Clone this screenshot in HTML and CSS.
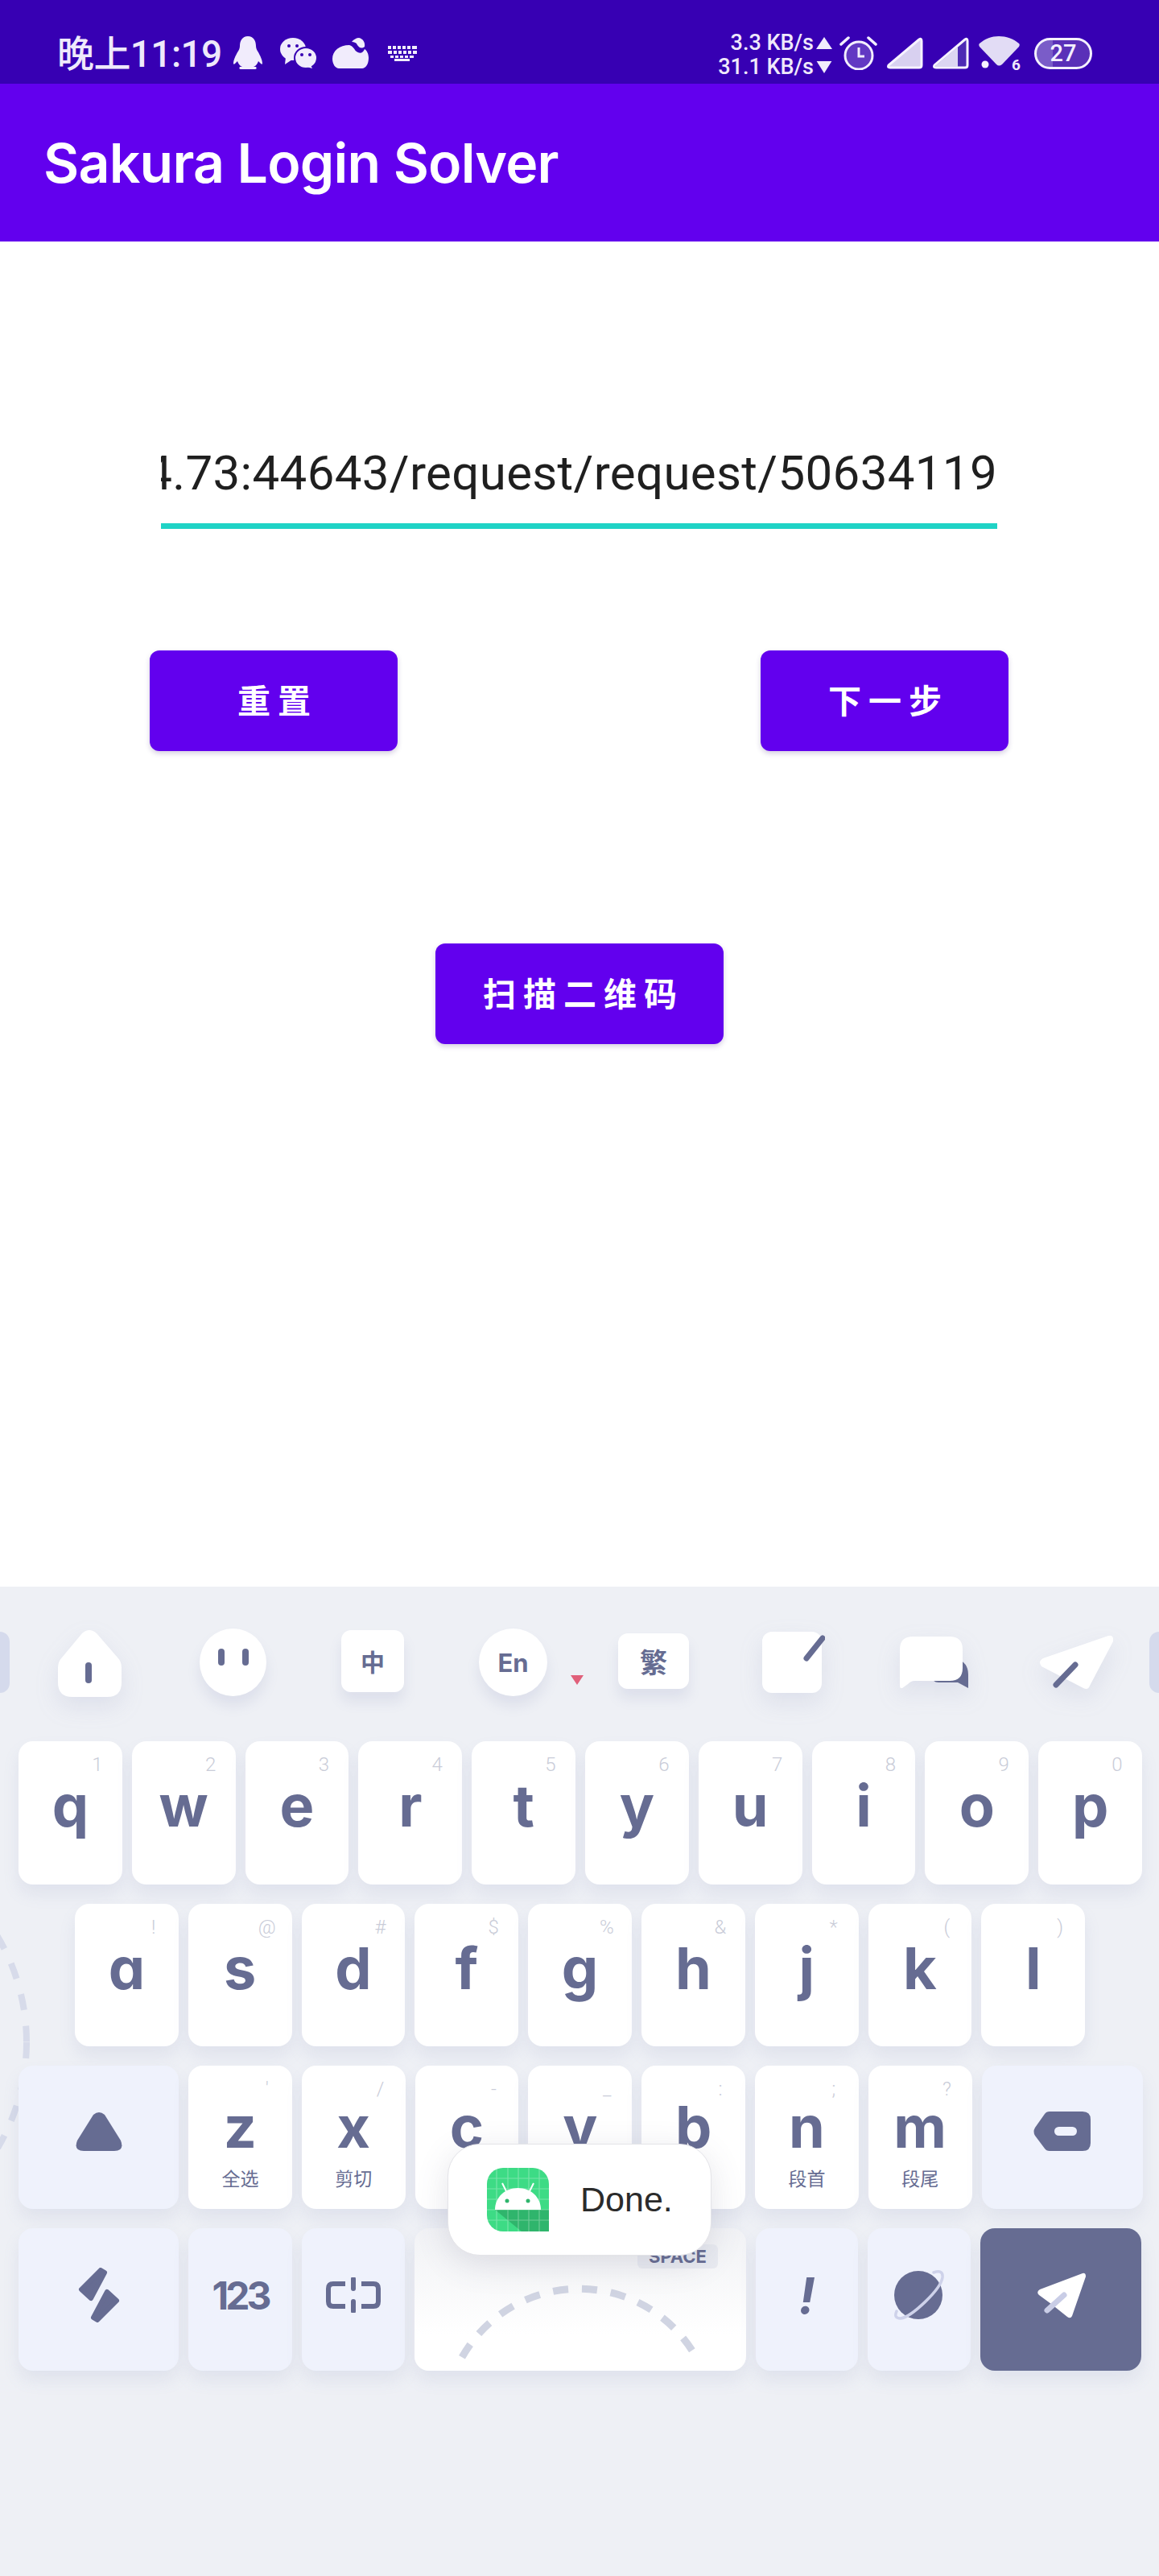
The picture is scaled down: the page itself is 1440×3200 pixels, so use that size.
FILE: index.html
```html
<!DOCTYPE html>
<html>
<head>
    <title>Sakura Login Solver</title>
    <link rel="stylesheet" href="styles.css">
</head>
<body>
    <div class="phone">
        <div class="status">
            <div class="status-left">
                <span class="clock">晚上11:19</span>
                <svg class="ic-qq" viewBox="0 0 36 41"><path d="M18 0c-7 0-10 6-10 12 0 3-1 5-3 8-2 4-5 9-5 14 0 1 1 1 2 0l3-3c1 3 3 6 6 7H8c-1 1-1 3 1 3h18c2 0 2-2 1-3h-3c3-1 5-4 6-7l3 3c1 1 2 1 2 0 0-5-3-10-5-14-2-3-3-5-3-8 0-6-3-12-10-12z"/></svg>
                <svg class="ic-wechat" viewBox="0 0 46 38"><ellipse cx="16" cy="14" rx="16" ry="14"/><path d="M7 24l-1 9 9-6z"/><ellipse cx="32" cy="25" rx="14" ry="13" stroke="#3700b3" stroke-width="2"/><path d="M38 34l2 4-7-2z"/><circle class="hole" cx="11" cy="10" r="2"/><circle class="hole" cx="21" cy="10" r="2"/><circle class="hole" cx="27" cy="21" r="2"/><circle class="hole" cx="37" cy="21" r="2"/></svg>
                <svg class="ic-cloud" viewBox="0 0 45 38"><path d="M21 9C9 9 0 16 0 26c0 7 4 12 8 12h29c4 0 8-5 8-13 0-5-2-9-5-11-2 5-6 6-10 3-3-2-3-6-9-8z"/><path d="M24 5c2-3 6-5 9-5 5 1 8 6 7 11-4 3-7 1-9-2-1-3-4-4-7-4z"/></svg>
                <svg class="ic-keys" viewBox="0 0 36 19"><path d="M0 0h4v4H0zM6 0h4v4H6zM12 0h4v4h-4zM18 0h4v4h-4zM24 0h4v4h-4zM30 0h6v4h-6zM0 6h5v4H0zM7 6h4v4H7zM13 6h4v4h-4zM19 6h4v4h-4zM25 6h4v4h-4zM31 6h5v4h-5zM3 12h4v3H3zM9 12h4v3H9zM15 12h4v3h-4zM21 12h4v3h-4zM27 12h5v3h-5zM8 16h19v3H8z"/></svg>
            </div>
            <div class="status-right">
                <div class="speed">
                    <div class="speed-line">3.3 KB/s<svg viewBox="0 0 20 15"><path d="M10 0l10 15H0z"/></svg></div>
                    <div class="speed-line">31.1 KB/s<svg viewBox="0 0 20 16"><path d="M0 0h20L10 16z"/></svg></div>
                </div>
                <svg class="ic-alarm" viewBox="0 0 47 42"><circle cx="24" cy="24" r="17" fill="#ffffff" fill-opacity=".22" stroke="#f3eeff" stroke-width="3"/><path d="M24 14v11h7" fill="none" stroke="#f3eeff" stroke-width="3"/><path d="M2 10l9-8M45 10l-9-8" fill="none" stroke="#f3eeff" stroke-width="3.5" stroke-linecap="round"/></svg>
                <svg class="ic-signal" viewBox="0 0 46 40"><path d="M41 3L3 35q-2 3 2 3h36q3 0 3-3V5q0-4-3-2z" fill="#d8d0f0" stroke="#f6f2ff" stroke-width="3"/></svg>
                <svg class="ic-signal" viewBox="0 0 46 40"><path d="M41 3L3 35q-2 3 2 3h36q3 0 3-3V5q0-4-3-2z" fill="#4d2ab4" stroke="#f6f2ff" stroke-width="3"/><path d="M32 12L4 36q-1 1 1 1h27z" fill="#dcd6f2"/></svg>
                <div class="wifi-box">
                    <svg class="ic-wifi" viewBox="0 0 51 43"><path d="M25 0c9 0 18 3 25 9 1 1 1 2 0 4L29 35q-4 3-7 0L1 13c-1-2-1-3 0-4C8 3 16 0 25 0z" fill="#e2dcf5"/><circle cx="8" cy="35" r="4.5" fill="#f6f2ff"/></svg>
                    <span class="wifi-num">6</span>
                </div>
                <div class="battery">27</div>
            </div>
        </div>

        <div class="appbar">Sakura Login Solver</div>

        <div class="content">
            <div class="field"><span class="field-text">4.73:44643/request/request/50634119</span></div>
            <div class="btn-row">
                <button class="btn">重置</button>
                <button class="btn">下一步</button>
            </div>
            <button class="btn btn-scan">扫描二维码</button>
        </div>

        <div class="keyboard">
            <svg class="deco-arc" viewBox="0 0 40 270"><circle cx="-225" cy="137" r="258" fill="none" stroke="#d7dbea" stroke-width="8" stroke-dasharray="20 20"/></svg>

            <div class="toolbar">
                <div class="blob blob-l"></div>
                <svg class="tb-house" viewBox="0 0 79 83"><path d="M30 4q9-8 18 0l26 30q5 5 5 13v18q0 18-18 18H18Q0 83 0 65V47q0-8 5-13z" fill="#fff"/><rect x="34" y="40" width="8" height="26" rx="4" fill="#666c92"/></svg>
                <div class="tb-round tb-face"><i></i><i></i></div>
                <div class="tb-square tb-zh">中</div>
                <div class="tb-round tb-en">En</div>
                <div class="tb-tri"></div>
                <div class="tb-square tb-fan">繁</div>
                <svg class="tb-note" viewBox="0 0 78 76"><rect width="74" height="76" rx="12" fill="#fff"/><path d="M55 33L75 8" stroke="#666c92" stroke-width="7" stroke-linecap="round" fill="none"/></svg>
                <svg class="tb-chat" viewBox="0 0 85 64"><path d="M40 48h30V27q15 5 15 20v17l-13-7H48q-8 0-8-9z" fill="#666c92"/><path d="M16 0h46q16 0 16 16v23q0 16-16 16H18q-4 0-8 4l-7 5q-3 1-3-3V16Q0 0 16 0z" fill="#fff"/></svg>
                <svg class="tb-plane" viewBox="0 0 92 68"><path d="M86 1L5 29q-7 4-2 10l52 27q6 3 8-3L92 8q1-9-6-7z" fill="#fff"/><path d="M21 62l24-25" stroke="#666c92" stroke-width="7" stroke-linecap="round"/></svg>
                <div class="blob blob-r"></div>
            </div>

            <div class="rows">
                <div class="row row-ten">
                    <div class="key"><span class="hint">1</span><span class="letter">q</span></div>
                    <div class="key"><span class="hint">2</span><span class="letter">w</span></div>
                    <div class="key"><span class="hint">3</span><span class="letter">e</span></div>
                    <div class="key"><span class="hint">4</span><span class="letter">r</span></div>
                    <div class="key"><span class="hint">5</span><span class="letter">t</span></div>
                    <div class="key"><span class="hint">6</span><span class="letter">y</span></div>
                    <div class="key"><span class="hint">7</span><span class="letter">u</span></div>
                    <div class="key"><span class="hint">8</span><span class="letter">i</span></div>
                    <div class="key"><span class="hint">9</span><span class="letter">o</span></div>
                    <div class="key"><span class="hint">0</span><span class="letter">p</span></div>
                </div>
                <div class="row row-ten row-home">
                    <div class="key"><span class="hint">!</span><span class="letter">a</span></div>
                    <div class="key"><span class="hint">@</span><span class="letter">s</span></div>
                    <div class="key"><span class="hint">#</span><span class="letter">d</span></div>
                    <div class="key"><span class="hint">$</span><span class="letter">f</span></div>
                    <div class="key"><span class="hint">%</span><span class="letter">g</span></div>
                    <div class="key"><span class="hint">&amp;</span><span class="letter">h</span></div>
                    <div class="key"><span class="hint">*</span><span class="letter">j</span></div>
                    <div class="key"><span class="hint">(</span><span class="letter">k</span></div>
                    <div class="key"><span class="hint">)</span><span class="letter">l</span></div>
                </div>
                <div class="row row-third">
                    <div class="key key-fn key-shift">
                        <svg class="ic-shift" viewBox="0 0 58 48"><path d="M22 3q7-6 14 0l20 32q5 13-8 13H10Q-3 48 2 35z" fill="#666c92"/></svg>
                    </div>
                    <div class="key key-low"><span class="hint">'</span><span class="letter">z</span><span class="sub">全选</span></div>
                    <div class="key key-low"><span class="hint">/</span><span class="letter">x</span><span class="sub">剪切</span></div>
                    <div class="key key-low"><span class="hint">-</span><span class="letter">c</span></div>
                    <div class="key key-low"><span class="hint">_</span><span class="letter">v</span></div>
                    <div class="key key-low"><span class="hint">:</span><span class="letter">b</span></div>
                    <div class="key key-low"><span class="hint">;</span><span class="letter">n</span><span class="sub">段首</span></div>
                    <div class="key key-low"><span class="hint">?</span><span class="letter">m</span><span class="sub">段尾</span></div>
                    <div class="key key-fn key-shift">
                        <svg class="ic-del" viewBox="0 0 71 49"><path d="M20 0h41q10 0 10 10v29q0 10-10 10H20q-4 0-6-3L2 30q-3-5 0-10L14 3q2-3 6-3z" fill="#666c92"/><rect x="26" y="19" width="28" height="11" rx="5.5" fill="#eff2fc"/></svg>
                    </div>
                </div>
                <div class="row row-last">
                    <div class="key key-fn">
                        <svg class="ic-sym" viewBox="0 0 52 68"><path d="M4 27L28 3l5 3-17 32z" fill="#666c92" stroke="#666c92" stroke-width="6" stroke-linejoin="round"/><path d="M48 41L24 65l-5-3 17-32z" fill="#666c92" stroke="#666c92" stroke-width="6" stroke-linejoin="round"/></svg>
                    </div>
                    <div class="key key-fn"><span class="num-label">123</span></div>
                    <div class="key key-fn">
                        <svg class="ic-link" viewBox="0 0 68 44"><path d="M24 8H9Q3 8 3 14v16q0 6 6 6h15M44 8h15q6 0 6 6v16q0 6-6 6H44" fill="none" stroke="#666c92" stroke-width="6"/><path d="M34 2v12M34 30v12" stroke="#666c92" stroke-width="6" stroke-linecap="round"/></svg>
                    </div>
                    <div class="key key-space">
                        <span class="space-tag">SPACE</span>
                        <svg class="space-arc" viewBox="0 0 412 177"><path d="M59 160A167 167 0 0 1 350 160" fill="none" stroke="#d0d4e2" stroke-width="9" stroke-dasharray="19 17"/></svg>
                    </div>
                    <div class="key key-fn"><span class="bang">!</span></div>
                    <div class="key key-fn">
                        <svg class="ic-planet" viewBox="0 0 62 62"><ellipse cx="30" cy="31" rx="30" ry="30" fill="#666c92"/><path d="M49 3q12-4 11 6C58 24 22 58 8 60q-9 0-5-9" fill="none" stroke="#ced2ea" stroke-width="3.5" stroke-linecap="round"/></svg>
                    </div>
                    <div class="key key-send">
                        <svg class="ic-send" viewBox="0 0 61 57"><path d="M57 1L4 21q-5 3-1 7l15 11 20 16q4 3 6-1L61 5q0-5-4-4z" fill="#fff"/><path d="M13 47l21-19" stroke="#c9cde6" stroke-width="7" stroke-linecap="round"/></svg>
                    </div>
                </div>
            </div>
        </div>

        <div class="toast">
            <svg class="toast-icon" viewBox="0 0 77 79">
                <rect width="77" height="79" rx="20" fill="#3ddb85"/>
                <path d="M52 52h25v27H43L10 52z" fill="#2fb56c"/>
                <path d="M0 13h77M0 26h77M0 39h77M0 52h77M0 65h77M12 0v79M26 0v79M39 0v79M52 0v79M65 0v79" stroke="#fff" stroke-opacity=".3" stroke-width="1.2"/>
                <path d="M10 52c0-16 13-27 28.500-27S67 36 67 52z" fill="#fff"/>
                <path d="M24 29l-5-10M53 29l5-10" stroke="#fff" stroke-width="2"/>
                <circle cx="25" cy="41" r="2.500" fill="#2fb56c"/>
                <circle cx="51" cy="41" r="2.500" fill="#2fb56c"/>
            </svg>
            <span class="toast-text">Done.</span>
        </div>
    </div>
</body>
</html>
```

FILE: styles.css
```css
* {
    box-sizing: border-box;
}

body {
    margin: 0;
    background-color: #fff;
    font-family: "Roboto", "Noto Sans CJK SC", sans-serif;
}

.phone {
    position: relative;
    width: 1440px;
    height: 3200px;
    overflow: hidden;
}

/* status bar */
.status {
    display: flex;
    justify-content: space-between;
    height: 104px;
    padding: 0 83px 0 71px;
    background-color: #3700b3;
    color: #efe9fb;
}

.status svg {
    fill: #f1ecfc;
    flex: none;
}

.status-left {
    display: flex;
    align-items: center;
}

.clock {
    font-size: 46px;
    font-weight: 500;
    line-height: 60px;
    margin-top: 29px;
    margin-right: 14px;
    letter-spacing: -0.6px;
}

.ic-qq {
    width: 36px;
    height: 41px;
    margin-top: 27px;
}

.ic-wechat {
    width: 46px;
    height: 38px;
    margin: 28px 0 0 22px;
}

.hole {
    fill: #3700b3;
}

.ic-cloud {
    width: 45px;
    height: 38px;
    margin: 28px 0 0 19px;
}

.ic-keys {
    width: 36px;
    height: 19px;
    margin: 29px 0 0 24px;
}

.status-right {
    display: flex;
    align-items: center;
    padding-top: 28px;
}

.speed {
    font-size: 27px;
    font-weight: 500;
    line-height: 30px;
    text-align: right;
    margin-top: 4px;
}

.speed-line {
    display: flex;
    align-items: center;
    justify-content: flex-end;
}

.speed-line svg {
    width: 20px;
    height: 15px;
    margin-left: 3px;
}

.ic-alarm {
    width: 47px;
    height: 42px;
    margin-left: 9px;
}

.ic-signal {
    width: 46px;
    height: 40px;
    margin-left: 11px;
}

.wifi-box {
    position: relative;
    width: 51px;
    height: 43px;
    margin-left: 12px;
}

.ic-wifi {
    width: 51px;
    height: 43px;
}

.wifi-num {
    position: absolute;
    right: -1px;
    bottom: -3px;
    font-size: 19px;
    font-weight: 700;
    line-height: 20px;
}

.battery {
    width: 72px;
    height: 39px;
    margin-left: 18px;
    border: 3px solid #f4f0ff;
    border-radius: 20px;
    background: linear-gradient(90deg, #7a5cc8 0 30%, #5a30b8 30%);
    color: #f4f0ff;
    font-size: 29px;
    font-weight: 500;
    line-height: 32px;
    text-align: center;
}

/* app bar */
.appbar {
    height: 196px;
    padding: 0 0 0 54px;
    background-color: #6200ee;
    color: #fff;
    font-family: "Inter", sans-serif;
    font-size: 68px;
    font-weight: 600;
    line-height: 196px;
    letter-spacing: -0.8px;
}

/* form */
.content {
    height: 1671px;
    padding-top: 253px;
    background-color: #fff;
}

.field {
    display: flex;
    justify-content: flex-end;
    width: 1039px;
    height: 104px;
    margin: 0 0 0 200px;
    padding: 0 0 27px 0;
    overflow: hidden;
    border-bottom: 7px solid #1fd3c6;
    color: #1f1f1f;
    font-size: 60px;
    line-height: 70px;
    white-space: nowrap;
    letter-spacing: 0.35px;
}

.field-text {
    flex: none;
}

.btn-row {
    display: flex;
    justify-content: space-between;
    margin: 151px 187px 0 186px;
}

.btn {
    display: block;
    width: 308px;
    height: 125px;
    padding: 0 0 6px 10px;
    border: none;
    border-radius: 12px;
    background-color: #6200ee;
    box-shadow: 0 3px 6px rgba(60, 30, 120, 0.22);
    color: #fff;
    font-family: "Noto Sans CJK SC", sans-serif;
    font-size: 41px;
    font-weight: 700;
    letter-spacing: 9px;
}

.btn-scan {
    width: 358px;
    margin: 239px 0 0 541px;
}

/* keyboard */
.keyboard {
    position: relative;
    height: 1229px;
    background-color: #eef0f5;
}

.deco-arc {
    position: absolute;
    left: 0;
    top: 429px;
    width: 40px;
    height: 270px;
}

.toolbar {
    display: flex;
    align-items: center;
    height: 188px;
    margin-bottom: 4px;
}

.toolbar svg {
    flex: none;
    filter: drop-shadow(0 12px 14px rgba(120, 130, 180, 0.14));
}

.blob {
    flex: none;
    width: 12px;
    height: 76px;
    background-color: #d5daec;
}

.blob-l {
    border-radius: 0 12px 12px 0;
}

.blob-r {
    margin-left: 45px;
    border-radius: 12px 0 0 12px;
}

.tb-house {
    width: 79px;
    height: 83px;
    margin-left: 60px;
    margin-top: 2px;
}

.tb-round,
.tb-square {
    display: flex;
    flex: none;
    align-items: center;
    justify-content: center;
    background-color: #fff;
    box-shadow: 0 12px 16px rgba(120, 130, 180, 0.14);
    color: #666c92;
    font-weight: 700;
}

.tb-round {
    border-radius: 50%;
}

.tb-square {
    border-radius: 12px;
    font-family: "Noto Sans CJK SC", sans-serif;
}

.tb-face {
    gap: 22px;
    width: 83px;
    height: 84px;
    margin-left: 97px;
    padding-bottom: 14px;
}

.tb-face i {
    width: 8px;
    height: 21px;
    border-radius: 4px;
    background-color: #666c92;
}

.tb-zh {
    width: 78px;
    height: 77px;
    margin: 0 0 4px 93px;
    font-size: 30px;
}

.tb-en {
    width: 85px;
    height: 84px;
    margin-left: 93px;
    font-family: "Inter", sans-serif;
    font-size: 31px;
}

.tb-tri {
    flex: none;
    width: 0;
    height: 0;
    margin: 44px 0 0 29px;
    border-top: 12px solid #e0607a;
    border-left: 8px solid transparent;
    border-right: 8px solid transparent;
}

.tb-fan {
    width: 88px;
    height: 69px;
    margin: 0 0 4px 43px;
    font-size: 34px;
}

.tb-note {
    width: 78px;
    height: 76px;
    margin-left: 91px;
}

.tb-chat {
    width: 85px;
    height: 64px;
    margin-left: 93px;
}

.tb-plane {
    width: 92px;
    height: 68px;
    margin-left: 88px;
}

.rows {
    position: relative;
    display: flex;
    flex-direction: column;
    gap: 24px;
    padding-left: 23px;
}

.row {
    display: grid;
    column-gap: 12px;
    height: 177.500px;
}

.row-ten {
    grid-template-columns: repeat(10, 128.800px);
}

.row-home {
    padding-left: 70px;
}

.row-third {
    grid-template-columns: 199px repeat(7, 128.800px) 200px;
}

.row-last {
    grid-template-columns: 199px 129px 128px 412px 127px 128px 200px;
}

.key {
    position: relative;
    display: flex;
    flex-direction: column;
    align-items: center;
    padding-top: 45px;
    border-radius: 18px;
    background-color: #fff;
    box-shadow: 0 12px 20px rgba(120, 130, 180, 0.12);
}

.key-low {
    padding-top: 41px;
}

.key-fn {
    justify-content: center;
    padding: 0 0 10px;
    background-color: #eff2fc;
}

.key-shift {
    padding-bottom: 14px;
}

.hint {
    position: absolute;
    top: 17px;
    right: 19px;
    width: 24px;
    color: #c9ccd8;
    font-size: 24px;
    font-weight: 300;
    line-height: 24px;
    text-align: center;
}

.letter {
    color: #666c92;
    font-family: "Inter", sans-serif;
    font-feature-settings: "cv11";
    font-size: 72px;
    font-weight: 700;
    line-height: 70px;
}

.sub {
    margin-top: 13px;
    color: #666c92;
    font-family: "Noto Sans CJK SC", sans-serif;
    font-size: 23px;
    line-height: 30px;
}

.num-label {
    color: #666c92;
    font-family: "Inter", sans-serif;
    font-size: 48px;
    font-weight: 700;
    letter-spacing: -4px;
}

.bang {
    color: #666c92;
    font-family: "Inter", sans-serif;
    font-size: 62px;
    font-style: italic;
    font-weight: 700;
}

.ic-shift {
    width: 58px;
    height: 48px;
}

.ic-del {
    width: 71px;
    height: 49px;
}

.ic-sym {
    width: 52px;
    height: 68px;
}

.ic-link {
    width: 68px;
    height: 44px;
}

.ic-planet {
    width: 62px;
    height: 62px;
}

.key-space {
    padding: 0;
    background: linear-gradient(180deg, #f1f2f5 0%, #fff 75%);
}

.space-tag {
    position: absolute;
    top: 20px;
    right: 35px;
    width: 100px;
    height: 30px;
    border-radius: 6px;
    background-color: #e9ebf1;
    color: #666c92;
    font-family: "Inter", sans-serif;
    font-size: 22px;
    font-weight: 700;
    line-height: 30px;
    text-align: center;
}

.space-arc {
    position: absolute;
    left: 0;
    top: 0;
    width: 100%;
    height: 100%;
}

.key-send {
    justify-content: center;
    padding: 0 0 10px;
    background-color: #666c92;
}

.ic-send {
    width: 61px;
    height: 57px;
}

/* toast */
.toast {
    position: absolute;
    left: 556px;
    top: 2663px;
    display: flex;
    align-items: center;
    width: 328px;
    height: 139px;
    padding-left: 48px;
    border: 1px solid #e4e4e8;
    border-radius: 40px;
    background-color: #fff;
    box-shadow: 0 10px 40px rgba(90, 90, 120, 0.16);
}

.toast-icon {
    flex: none;
    width: 77px;
    height: 79px;
    margin-right: 39px;
}

.toast-text {
    color: #2b2b2b;
    font-family: "Liberation Sans", sans-serif;
    font-size: 43px;
}
```
